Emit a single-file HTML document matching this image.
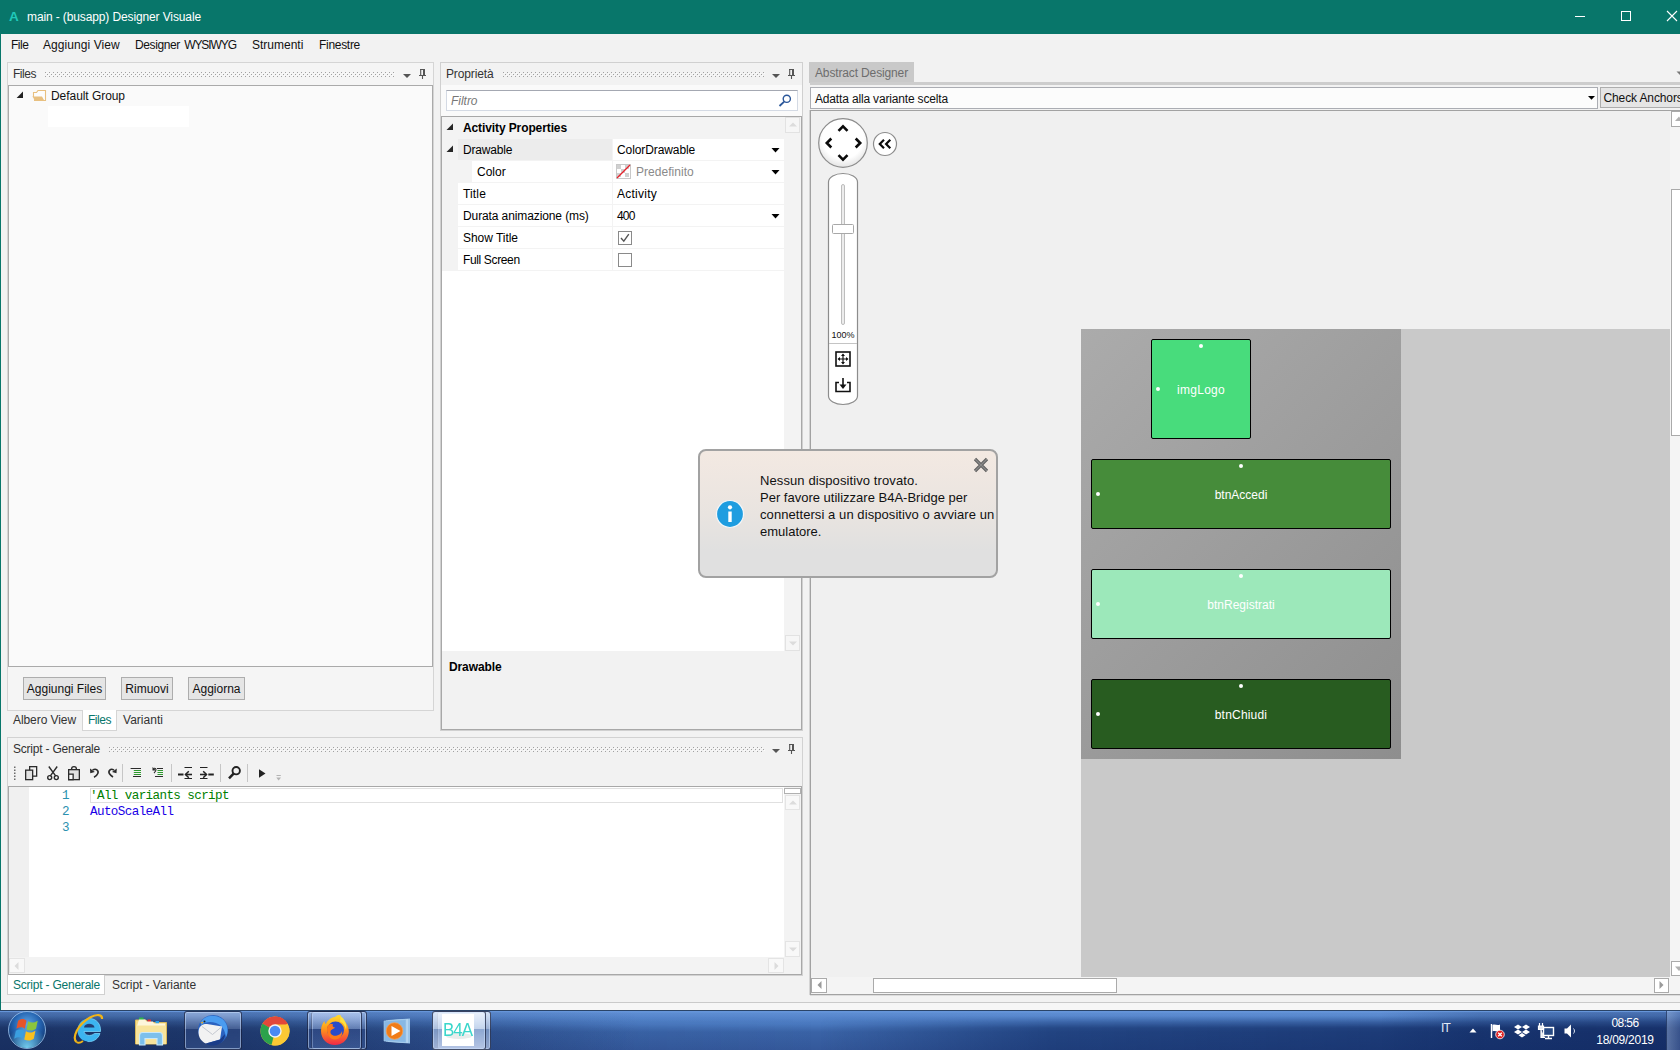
<!DOCTYPE html>
<html>
<head>
<meta charset="utf-8">
<title>Designer Visuale</title>
<style>
*{box-sizing:border-box;margin:0;padding:0}
html,body{width:1680px;height:1050px;overflow:hidden;background:#f2f2f2}
body{font-family:"Liberation Sans",sans-serif;font-size:12px;color:#111;position:relative}
.a{position:absolute}
.t{position:absolute;white-space:nowrap;line-height:16px;font-size:12px;color:#111}
.grip{position:absolute;height:6px;background-image:radial-gradient(circle,#b4b4b4 0.55px,transparent 0.85px),radial-gradient(circle,#b4b4b4 0.55px,transparent 0.85px);background-size:4px 4px,4px 4px;background-position:0 -1px,2px 1px}
.btn{position:absolute;height:22px;border:1px solid #adadad;background:#e5e5e5;text-align:center;line-height:20px;font-size:12px;white-space:nowrap}
.row{position:absolute;left:82px;width:702px;height:21px;background:#fff}
.mono{font-family:"Liberation Mono",monospace;font-size:12.6px;letter-spacing:-0.61px}
.view{position:absolute;border:1px solid #000;border-radius:2px;color:#fff;text-align:center;font-size:12px}
.view span{position:absolute;left:0;right:0;top:50%;margin-top:-7.500px;line-height:16px}
.view .dt{position:absolute;left:50%;top:3.500px;margin-left:-2.500px;width:4px;height:4px;border-radius:50%;background:#fff}
.view .dl{position:absolute;left:3.500px;top:50%;margin-top:-2.500px;width:4px;height:4px;border-radius:50%;background:#fff}
.dlg{font-size:13px;line-height:17px;color:#111}
.tbb{position:absolute;top:1011px;height:39px;border:1px solid rgba(20,30,60,.75);border-radius:3px;box-shadow:inset 0 0 0 1px rgba(200,220,250,.55);background:linear-gradient(rgba(190,210,245,.55),rgba(140,165,215,.35) 45%,rgba(50,75,135,.45) 46%,rgba(70,100,160,.4))}
.sbbtn{position:absolute;background:#fdfdfd;border:1px solid #dcdcdc}
</style>
</head>
<body>
<svg class="a" width="0" height="0" style="left:0;top:0"><defs><pattern id="gp" width="4" height="4" patternUnits="userSpaceOnUse"><rect x="0" y="0" width="1" height="1" fill="#a2a2a2"/><rect x="2" y="2" width="1" height="1" fill="#a2a2a2"/><rect x="1" y="1" width="1" height="1" fill="#fbfbfb"/><rect x="3" y="3" width="1" height="1" fill="#fbfbfb"/></pattern></defs></svg>
<!-- TITLE BAR -->
<div class="a" id="titlebar" style="left:0;top:0;width:1680px;height:34px;background:#08766a"></div>
<div class="a" style="left:0;top:34px;width:1px;height:976px;background:#08766a"></div>
<div class="t" style="left:9px;top:8px;color:#20c9ba;font-weight:bold;font-size:13.5px;line-height:18px">A</div>
<div class="t" style="left:27px;top:9px;color:#fff;letter-spacing:-0.121px/*auto*/">main - (busapp) Designer Visuale</div>
<svg class="a" style="left:1560px;top:0" width="120" height="34" viewBox="0 0 120 34">
 <path d="M15 16.5H25" stroke="#fff" stroke-width="1" fill="none"/>
 <rect x="61.5" y="11.5" width="9" height="9" stroke="#fff" stroke-width="1" fill="none"/>
 <path d="M107 11L117 21M117 11L107 21" stroke="#fff" stroke-width="1.1" fill="none"/>
</svg>

<!-- MENU BAR -->
<div class="t" style="left:11px;top:37px;letter-spacing:-0.461px/*auto*/">File</div>
<div class="t" style="left:43px;top:37px;letter-spacing:0.074px/*auto*/">Aggiungi View</div>
<div class="t" style="left:135px;top:37px;letter-spacing:-0.379px/*auto*/">Designer</div>
<div class="t" style="left:184.200px;top:37px;letter-spacing:-1.092px/*auto*/">WYSIWYG</div>
<div class="t" style="left:252px;top:37px">Strumenti</div>
<div class="t" style="left:319px;top:37px;letter-spacing:-0.295px/*auto*/">Finestre</div>

<!-- FILES PANEL -->
<div class="a" id="filespanel" style="left:7px;top:62px;width:427px;height:649px;border:1px solid #d5d5d5;background:#f5f5f5"></div>
<div class="t" style="left:13px;top:66px;color:#333;letter-spacing:-0.469px/*auto*/">Files</div>
<svg class="a" style="left:45px;top:72px" width="350" height="5" viewBox="0 0 350 5"><rect width="350" height="5" fill="url(#gp)"/></svg>
<svg class="a" style="left:403px;top:66px" width="28" height="18" viewBox="0 0 28 18">
 <path d="M0 8H8L4 12Z" fill="#555"/>
 <path d="M17 3.500H22M17.700 3V9.500M16 9.500H23M19.500 10V13" stroke="#555" stroke-width="1.100" fill="none"/><path d="M21 3V9.500" stroke="#555" stroke-width="2" fill="none"/>
</svg>
<div class="a" id="filestree" style="left:8px;top:85px;width:425px;height:582px;border:1px solid #aaa;background:#fafafa"></div>
<svg class="a" style="left:16px;top:89px" width="32" height="13" viewBox="0 0 32 13">
 <path d="M7 2.600V9H0.600Z" fill="#222"/>
 <path d="M17.500 8V3.500H20.500L22 1.500H29.500V11.500H18" fill="#fdfdfd" stroke="#e8c080" stroke-width="1.100"/>
 <path d="M16.300 7.500H26L28.500 12H18.500L17.500 9Z" fill="#e8c080"/>
</svg>
<div class="t" style="left:51px;top:88px;letter-spacing:-0.055px/*auto*/">Default Group</div>
<div class="a" style="left:48px;top:106px;width:141px;height:21px;background:#fff"></div>
<div class="btn" style="left:23px;top:677px;width:83px;height:23px;line-height:23px">Aggiungi Files</div>
<div class="btn" style="left:121px;top:677px;width:52px;height:23px;line-height:23px">Rimuovi</div>
<div class="btn" style="left:188px;top:677px;width:57px;height:23px;line-height:23px">Aggiorna</div>
<!-- tabs -->
<div class="t" style="left:13px;top:712px;color:#333;letter-spacing:-0.075px/*auto*/">Albero View</div>
<div class="a" style="left:82px;top:710px;width:35px;height:21px;background:#fff;border:1px solid #d5d5d5;border-top:none"></div>
<div class="t" style="left:88px;top:712px;color:#08766a;letter-spacing:-0.469px/*auto*/">Files</div>
<div class="t" style="left:123px;top:712px;color:#333;letter-spacing:0.025px/*auto*/">Varianti</div>

<!-- PROPRIETA PANEL -->
<div class="a" id="proppanel" style="left:440px;top:62px;width:363px;height:669px;border:1px solid #d0d0d0;background:linear-gradient(#f2f2f2 0,#f2f2f2 22px,#fafafa 22px)"></div>
<div class="t" style="left:446px;top:66px;color:#333;letter-spacing:-0.134px/*auto*/">Proprietà</div>
<svg class="a" style="left:503px;top:72px" width="262" height="5" viewBox="0 0 262 5"><rect width="262" height="5" fill="url(#gp)"/></svg>
<svg class="a" style="left:772px;top:66px" width="28" height="18" viewBox="0 0 28 18">
 <path d="M0 8H8L4 12Z" fill="#555"/>
 <path d="M17 3.500H22M17.700 3V9.500M16 9.500H23M19.500 10V13" stroke="#555" stroke-width="1.100" fill="none"/><path d="M21 3V9.500" stroke="#555" stroke-width="2" fill="none"/>
</svg>
<div class="a" id="filter" style="left:446px;top:90px;width:352px;height:21px;border:1px solid #d4dae4;border-top-color:#a4a8b2;background:#fff"></div>
<div class="t" style="left:451px;top:93px;color:#777;font-style:italic;letter-spacing:-0.029px/*auto*/">Filtro</div>
<div class="a" id="propgrid" style="left:441px;top:116px;width:361px;height:614px;border:1px solid #a8a8a8;background:#fff"></div>

<div class="a" style="left:442px;top:117px;width:359px;height:154px;background:#f3f3f3"></div>
<div class="a" style="left:784px;top:117px;width:17px;height:534px;background:#f3f3f3"></div>
<div class="a" style="left:442px;top:651px;width:359px;height:78px;background:#f2f2f2"></div>
<div class="t" style="left:463px;top:120px;font-weight:bold;color:#000;letter-spacing:-0.108px/*auto*/">Activity Properties</div>
<svg class="a" style="left:446px;top:123px" width="8" height="8" viewBox="0 0 8 8"><path d="M7 0.5V7H0.5Z" fill="#262626"/></svg>
<svg class="a" style="left:446px;top:145px" width="8" height="8" viewBox="0 0 8 8"><path d="M7 0.5V7H0.5Z" fill="#262626"/></svg>
<div class="a" style="left:458px;top:139px;width:154px;height:21px;background:#ececec"></div>
<div class="a" style="left:613px;top:139px;width:171px;height:21px;background:#fff"></div>
<div class="t" style="left:463px;top:142px;color:#000;letter-spacing:-0.188px/*auto*/">Drawable</div>
<div class="t" style="left:617px;top:142px;color:#000;letter-spacing:-0.090px/*auto*/">ColorDrawable</div>
<svg class="a" style="left:771px;top:148px" width="9" height="5" viewBox="0 0 9 5"><path d="M0.5 0H8.5L4.5 4.5Z" fill="#000"/></svg>
<div class="a" style="left:472px;top:161px;width:140px;height:21px;background:#fff"></div>
<div class="a" style="left:613px;top:161px;width:171px;height:21px;background:#fff"></div>
<div class="t" style="left:477px;top:164px;color:#000">Color</div>
<svg class="a" style="left:771px;top:170px" width="9" height="5" viewBox="0 0 9 5"><path d="M0.5 0H8.5L4.5 4.5Z" fill="#000"/></svg>
<div class="a" style="left:458px;top:183px;width:154px;height:21px;background:#fff"></div>
<div class="a" style="left:613px;top:183px;width:171px;height:21px;background:#fff"></div>
<div class="t" style="left:463px;top:186px;color:#000;letter-spacing:0.153px/*auto*/">Title</div>
<div class="t" style="left:617px;top:186px;color:#000;letter-spacing:0.248px/*auto*/">Activity</div>
<div class="a" style="left:458px;top:205px;width:154px;height:21px;background:#fff"></div>
<div class="a" style="left:613px;top:205px;width:171px;height:21px;background:#fff"></div>
<div class="t" style="left:463px;top:208px;color:#000;letter-spacing:-0.107px/*auto*/">Durata animazione (ms)</div>
<div class="t" style="left:617px;top:208px;color:#000;letter-spacing:-0.844px/*auto*/">400</div>
<svg class="a" style="left:771px;top:214px" width="9" height="5" viewBox="0 0 9 5"><path d="M0.5 0H8.5L4.5 4.5Z" fill="#000"/></svg>
<div class="a" style="left:458px;top:227px;width:154px;height:21px;background:#fff"></div>
<div class="a" style="left:613px;top:227px;width:171px;height:21px;background:#fff"></div>
<div class="t" style="left:463px;top:230px;color:#000;letter-spacing:-0.036px/*auto*/">Show Title</div>
<div class="a" style="left:458px;top:249px;width:154px;height:21px;background:#fff"></div>
<div class="a" style="left:613px;top:249px;width:171px;height:21px;background:#fff"></div>
<div class="t" style="left:463px;top:252px;color:#000;letter-spacing:-0.364px/*auto*/">Full Screen</div>
<svg class="a" style="left:616px;top:164px" width="15" height="15" viewBox="0 0 15 15">
 <rect x="0.5" y="0.5" width="14" height="14" fill="#fff" stroke="#c8c8c8"/>
 <rect x="1" y="1" width="4" height="4" fill="#d0d0d0"/><rect x="9" y="1" width="4" height="4" fill="#d0d0d0"/>
 <rect x="5" y="5" width="4" height="4" fill="#d0d0d0"/><rect x="1" y="9" width="4" height="4" fill="#d0d0d0"/><rect x="9" y="9" width="4" height="4" fill="#d0d0d0"/>
 <path d="M1 14L14 1" stroke="#e8202a" stroke-width="1.3"/>
</svg>
<div class="t" style="left:636px;top:164px;color:#8a8a8a;letter-spacing:0.030px/*auto*/">Predefinito</div>
<svg class="a" style="left:618px;top:231px" width="14" height="14" viewBox="0 0 14 14"><rect x="0.5" y="0.5" width="13" height="13" fill="#fff" stroke="#8a8a8a"/><path d="M3 7L5.8 10.2L10.8 3.2" stroke="#555" stroke-width="1.4" fill="none"/></svg>
<svg class="a" style="left:618px;top:253px" width="14" height="14" viewBox="0 0 14 14"><rect x="0.5" y="0.5" width="13" height="13" fill="#fff" stroke="#8a8a8a"/></svg>
<div class="sbbtn" style="left:785px;top:117px;width:15px;height:16px;background:#f6f6f6;border-color:#e2e2e2"></div><svg class="a" style="left:789px;top:122px" width="8" height="5" viewBox="0 0 8 5"><path d="M0 4.5H8L4 0.5Z" fill="#dcdcdc"/></svg>
<div class="sbbtn" style="left:785px;top:635px;width:15px;height:16px;background:#f6f6f6;border-color:#e2e2e2"></div><svg class="a" style="left:789px;top:641px" width="8" height="5" viewBox="0 0 8 5"><path d="M0 0.5H8L4 4.5Z" fill="#dcdcdc"/></svg>
<div class="t" style="left:449px;top:659px;font-weight:bold;color:#000;letter-spacing:-0.107px/*auto*/">Drawable</div>
<svg class="a" style="left:778px;top:93px" width="15" height="15" viewBox="0 0 15 15"><circle cx="8.8" cy="5.8" r="3.6" fill="none" stroke="#2b579a" stroke-width="1.4"/><path d="M6.2 8.6L1.5 13" stroke="#2b579a" stroke-width="1.8"/></svg>

<!-- SCRIPT PANEL -->
<div class="a" id="scriptpanel" style="left:7px;top:737px;width:796px;height:239px;border:1px solid #d2d2d2;background:#f2f2f2"></div>
<div class="t" style="left:13px;top:741px;color:#333;letter-spacing:-0.218px/*auto*/">Script - Generale</div>
<svg class="a" style="left:109px;top:747px" width="656" height="5" viewBox="0 0 656 5"><rect width="656" height="5" fill="url(#gp)"/></svg>
<svg class="a" style="left:772px;top:741px" width="28" height="18" viewBox="0 0 28 18">
 <path d="M0 8H8L4 12Z" fill="#555"/>
 <path d="M17 3.500H22M17.700 3V9.500M16 9.500H23M19.500 10V13" stroke="#555" stroke-width="1.100" fill="none"/><path d="M21 3V9.500" stroke="#555" stroke-width="2" fill="none"/>
</svg>
<div class="a" id="editor" style="left:8px;top:786px;width:794px;height:189px;border:1px solid #a8a8a8;background:#fff"></div>
<svg class="a" id="toolbar" style="left:10px;top:762px" width="280" height="24" viewBox="0 0 280 24">
 <g fill="#6a6a6a"><rect x="4" y="4.500" width="1.500" height="1.500"/><rect x="4" y="7.500" width="1.500" height="1.500"/><rect x="4" y="10.500" width="1.500" height="1.500"/><rect x="4" y="13.500" width="1.500" height="1.500"/><rect x="4" y="16.500" width="1.500" height="1.500"/></g>
 <!-- copy -->
 <g stroke="#2b2b2b" stroke-width="1.300"><rect x="19.650" y="4.650" width="7" height="9.500" fill="#f2f2f2"/><rect x="15.650" y="8.150" width="7" height="9.500" fill="#e2e2e2"/></g>
 <!-- cut -->
 <g fill="none" stroke="#2b2b2b" stroke-width="1.400"><path d="M38.800 4.500L45.800 14.200M47.200 4.500L40.200 14.200"/><circle cx="39.700" cy="15.600" r="2"/><circle cx="46.300" cy="15.600" r="2"/></g>
 <!-- paste -->
 <g stroke="#2b2b2b" stroke-width="1.300"><path d="M61.500 7.500A2.500 2.800 0 0 1 66.500 7.500" fill="none"/><rect x="58.650" y="7.650" width="10.700" height="10" fill="#e2e2e2"/><rect x="58.650" y="12.150" width="4.500" height="5.500" fill="#fafafa"/></g>
 <!-- undo -->
 <path d="M82.500 8.200C86 5.800 89 8.500 87.800 11.500C87 13.500 85.500 14.500 84 15.200" fill="none" stroke="#2b2b2b" stroke-width="1.600"/><path d="M80 6.500L80.300 11.300L84.800 10Z" fill="#2b2b2b"/>
 <!-- redo -->
 <path d="M104 8.200C100.500 5.800 97.800 9 99.500 11.800C100.500 13.300 101.800 14.200 103 15" fill="none" stroke="#2b2b2b" stroke-width="1.600"/><path d="M106.800 6.500L106.500 11.300L102 10Z" fill="#2b2b2b"/>
 <path d="M112.500 2V20" stroke="#c6c6c6"/>
 <!-- comment -->
 <path d="M120.600 6.500H131M123 14.500H131" stroke="#2b2b2b" stroke-width="1.100"/><path d="M123.800 8.500H131M123.800 10.500H131M123.800 12.500H131" stroke="#2f9a2f" stroke-width="1"/>
 <!-- uncomment -->
 <path d="M147 6.500H153M145 14.500H153" stroke="#2b2b2b" stroke-width="1.100"/><path d="M147.500 8.500H153M147.500 10.500H153M147.500 12.500H153" stroke="#2f9a2f" stroke-width="1"/>
 <path d="M143.500 6.500C146.500 5.500 147 8.500 144 11" fill="none" stroke="#2b2b2b" stroke-width="1.100"/><path d="M142.500 5V8.500H146Z" fill="#2b2b2b"/>
 <path d="M161.500 2V20" stroke="#c6c6c6"/>
 <!-- outdent / indent -->
 <g stroke="#222" fill="none"><path d="M174.500 5.500H182M174.500 16.500H182" stroke-width="1"/><path d="M168 12.500H173.500" stroke-width="2"/><path d="M175.500 12.500H182" stroke-width="1.600"/><path d="M178.800 9.200L175.500 12.500L178.800 15.800" stroke-width="1.500"/></g>
 <g stroke="#222" fill="none"><path d="M190 5.500H197.500M190 16.500H197.500" stroke-width="1"/><path d="M198.300 12.500H203.800" stroke-width="2"/><path d="M190 12.500H196.500" stroke-width="1.600"/><path d="M193.200 9.200L196.500 12.500L193.200 15.800" stroke-width="1.500"/></g>
 <path d="M210.500 2V20" stroke="#c6c6c6"/>
 <!-- find -->
 <circle cx="226.200" cy="8.700" r="3.700" fill="none" stroke="#222" stroke-width="1.900"/><path d="M223.600 11.600L219 16.300" stroke="#222" stroke-width="2.500"/>
 <path d="M237.500 2V20" stroke="#c6c6c6"/>
 <!-- play -->
 <path d="M249 7.200V15.800L255.500 11.500Z" fill="#222"/>
 <path d="M266.500 13.500H270.800" stroke="#b4b4b4" stroke-width="1"/><path d="M266.300 15.500H271L268.650 18.500Z" fill="#b4b4b4"/>
</svg>
<div class="a" style="left:9px;top:787px;width:20px;height:170px;background:#f0f0f0"></div>
<div class="a" style="left:90px;top:788px;width:693px;height:15px;border:1px solid #e0e0e0;background:#fff"></div>
<div class="t mono" style="left:62px;top:788px;color:#2b91af">1</div>
<div class="t mono" style="left:62px;top:804px;color:#2b91af">2</div>
<div class="t mono" style="left:62px;top:820px;color:#2b91af">3</div>
<div class="t mono" style="left:90px;top:788px;color:#008000">'All variants script</div>
<div class="t mono" style="left:90px;top:804px;color:#1a00e6">AutoScaleAll</div>
<!-- editor scrollbars -->
<div class="a" style="left:784px;top:787px;width:17px;height:170px;background:#f3f3f3"></div>
<div class="a" style="left:9px;top:957px;width:792px;height:17px;background:#f3f3f3"></div>
<div class="sbbtn" style="left:784px;top:788px;width:17px;height:6px;background:#fff;border-color:#b0b0b0"></div>
<div class="sbbtn" style="left:785px;top:795px;width:15px;height:15px;background:#f8f8f8;border-color:#e4e4e4"></div>
<svg class="a" style="left:789px;top:800px" width="8" height="5" viewBox="0 0 8 5"><path d="M0 4.500H8L4 0.500Z" fill="#dcdcdc"/></svg>
<div class="sbbtn" style="left:785px;top:941px;width:15px;height:16px;background:#f8f8f8;border-color:#e4e4e4"></div>
<svg class="a" style="left:789px;top:947px" width="8" height="5" viewBox="0 0 8 5"><path d="M0 0.500H8L4 4.500Z" fill="#dcdcdc"/></svg>
<div class="sbbtn" style="left:9px;top:958px;width:16px;height:15px;background:#f8f8f8;border-color:#e4e4e4"></div>
<svg class="a" style="left:14px;top:962px" width="5" height="8" viewBox="0 0 5 8"><path d="M4.500 0V8L0.500 4Z" fill="#dcdcdc"/></svg>
<div class="sbbtn" style="left:768px;top:958px;width:16px;height:15px;background:#f8f8f8;border-color:#e4e4e4"></div>
<svg class="a" style="left:774px;top:962px" width="5" height="8" viewBox="0 0 5 8"><path d="M0.500 0V8L4.500 4Z" fill="#dcdcdc"/></svg>
<div class="a" style="left:7px;top:975px;width:98px;height:20px;background:#fff;border:1px solid #d0d0d0;border-top:none"></div>
<div class="t" style="left:13px;top:977px;color:#08766a;letter-spacing:-0.218px/*auto*/">Script - Generale</div>
<div class="t" style="left:112px;top:977px;color:#333;letter-spacing:-0.068px/*auto*/">Script - Variante</div>

<!-- ABSTRACT DESIGNER -->
<div class="a" id="adtab" style="left:809px;top:62px;width:105px;height:21px;background:#c9c9c9"></div>
<div class="t" style="left:815px;top:65px;color:#6d6d6d;letter-spacing:-0.140px/*auto*/">Abstract Designer</div>
<div class="a" style="left:810px;top:82px;width:870px;height:3px;background:#cdcdcd"></div>
<svg class="a" style="left:1676px;top:71px" width="4" height="5" viewBox="0 0 4 5"><path d="M0.500 0.500H8L4.500 4.500Z" fill="#777"/></svg>
<div class="a" id="combo" style="left:810px;top:87px;width:788px;height:22px;border:1px solid #abadb3;background:#fcfcfc"></div>
<div class="t" style="left:815px;top:91px;letter-spacing:-0.164px/*auto*/">Adatta alla variante scelta</div>
<div class="btn" style="left:1600px;top:87px;width:100px;text-align:left;padding-left:2.500px;height:21px;line-height:20px;letter-spacing:-.12px">Check Anchors</div>
<svg class="a" style="left:1588px;top:96px" width="7" height="4" viewBox="0 0 7 4"><path d="M0 0H7L3.500 3.800Z" fill="#000"/></svg>
<div class="a" id="canvas" style="left:810px;top:110px;width:870px;height:885px;border:1px solid #a2a2a2;border-right:none;background:#f0f0f0"></div>
<div class="a" style="left:809px;top:110px;width:1px;height:885px;background:#d4d4d4"></div>
<div class="a" style="left:810px;top:995px;width:870px;height:1px;background:#dcdcdc"></div>
<div class="a" id="grayarea" style="left:1081px;top:329px;width:590px;height:648px;background:#c9c9c9"></div>
<div class="a" id="phone" style="left:1081px;top:329px;width:320px;height:430px;background:linear-gradient(135deg,#ababab,#8e8e8e)"></div>


<!-- designer scrollbars -->
<div class="a" style="left:1670px;top:111px;width:10px;height:867px;background:#f4f4f4"></div>
<div class="a" style="left:812px;top:977px;width:868px;height:17px;background:#f4f4f4"></div>
<div class="sbbtn" style="left:1671px;top:111px;width:16px;height:16px;background:#fff;border-color:#aaa"></div>
<svg class="a" style="left:1675px;top:116px" width="8" height="6" viewBox="0 0 8 6"><path d="M0 5H8L4 0.500Z" fill="#b0b0b0"/></svg>
<div class="sbbtn" style="left:1671px;top:189px;width:16px;height:247px;background:#fff;border-color:#aaa"></div>
<div class="sbbtn" style="left:1671px;top:961px;width:16px;height:15px;background:#fff;border-color:#aaa"></div>
<svg class="a" style="left:1675px;top:966px" width="8" height="6" viewBox="0 0 8 6"><path d="M0 0.500H8L4 5Z" fill="#b0b0b0"/></svg>
<div class="sbbtn" style="left:811px;top:978px;width:16px;height:15px;background:#fff;border-color:#aaa"></div>
<svg class="a" style="left:817px;top:981px" width="5" height="8" viewBox="0 0 5 8"><path d="M4.500 0V8L0.500 4Z" fill="#9a9a9a"/></svg>
<div class="sbbtn" style="left:873px;top:978px;width:244px;height:15px;background:#fff;border-color:#aaa"></div>
<div class="sbbtn" style="left:1654px;top:978px;width:15px;height:15px;background:#fff;border-color:#aaa"></div>
<svg class="a" style="left:1659px;top:981px" width="5" height="8" viewBox="0 0 5 8"><path d="M0.500 0V8L4.500 4Z" fill="#9a9a9a"/></svg>

<!-- nav tools -->
<svg class="a" id="navtools" style="left:812px;top:112px" width="100" height="300" viewBox="0 0 100 300">
 <defs><radialGradient id="rg" cx="50%" cy="40%" r="60%"><stop offset="70%" stop-color="#fff"/><stop offset="100%" stop-color="#e4e4e4"/></radialGradient></defs>
 <circle cx="31" cy="31" r="24.300" fill="url(#rg)" stroke="#8c8c8c" stroke-width="1.200"/>
 <g fill="none" stroke="#0a0a0a" stroke-width="2.600"><path d="M26.500 18.800L31 14.300L35.500 18.800"/><path d="M26.500 43.200L31 47.700L35.500 43.200"/><path d="M19.300 26.500L14.800 31L19.300 35.500"/><path d="M43.700 26.500L48.200 31L43.700 35.500"/></g>
 <circle cx="73" cy="32" r="11.500" fill="#fff" stroke="#8c8c8c" stroke-width="1.200"/>
 <g fill="none" stroke="#0a0a0a" stroke-width="2.200"><path d="M72 27.800L67.800 32L72 36.200"/><path d="M78.300 27.800L74.100 32L78.300 36.200"/></g>
 <rect x="16.500" y="61.500" width="29" height="231" rx="14.500" ry="8.500" fill="#fff" stroke="#8c8c8c" stroke-width="1.200"/>
 <rect x="29.500" y="72.500" width="3" height="140" rx="1.500" fill="#ececec" stroke="#bdbdbd"/>
 <rect x="20.500" y="112.500" width="21" height="9" rx="1" fill="#fff" stroke="#a8a8a8"/>
 <path d="M17 231.500H45" stroke="#c4c4c4"/>
 <!-- fit icon -->
 <rect x="24" y="240" width="14" height="14" fill="#fff" stroke="#111" stroke-width="1.600"/>
 <path d="M31 242.500V251.500M26.500 247H35.500" stroke="#111" stroke-width="1.200"/>
 <path d="M31 241.500L29 244H33ZM31 252.500L29 250H33ZM25.500 247L28 245V249ZM36.500 247L34 245V249Z" fill="#111"/>
 <!-- save icon -->
 <path d="M27 270.500H24V279.500H38V270.500H35" fill="none" stroke="#111" stroke-width="1.600"/>
 <path d="M31 266V274" stroke="#111" stroke-width="1.600"/><path d="M27.500 272.500H34.500L31 277Z" fill="#111"/>
</svg>
<div class="t" style="left:831px;top:329px;font-size:9px;width:24px;text-align:center;color:#111;line-height:12px">100%</div>

<!-- views -->
<div class="view" style="left:1151px;top:339px;width:100px;height:100px;background:#48dc7c"><i class="dt"></i><i class="dl"></i><span style="letter-spacing:.3px">imgLogo</span></div>
<div class="view" style="left:1091px;top:459px;width:300px;height:70px;background:#468c3a"><i class="dt"></i><i class="dl"></i><span>btnAccedi</span></div>
<div class="view" style="left:1091px;top:569px;width:300px;height:70px;background:#9ce8ba"><i class="dt"></i><i class="dl"></i><span>btnRegistrati</span></div>
<div class="view" style="left:1091px;top:679px;width:300px;height:70px;background:#285c20"><i class="dt"></i><i class="dl"></i><span style="letter-spacing:.2px">btnChiudi</span></div>

<!-- dialog -->
<div class="a" id="dialog" style="left:698px;top:449px;width:300px;height:129px;border:2px solid #a2a2a2;border-radius:8px;background:linear-gradient(#f3e9e2,#e9e4e0 50%,#e0e0e0 80%)"></div>
<svg class="a" style="left:715px;top:499px" width="30" height="30" viewBox="0 0 30 30"><circle cx="15" cy="15" r="13.500" fill="#1e9de0" stroke="#f4f6f8" stroke-width="1.200"/><rect x="13.300" y="12.500" width="3.400" height="10.500" fill="#fff"/><circle cx="15" cy="8.300" r="2.100" fill="#fff"/></svg>
<svg class="a" style="left:972px;top:456px" width="18" height="18" viewBox="0 0 18 18"><path d="M3 3L15 15M15 3L3 15" stroke="#606060" stroke-width="3.200"/><path d="M3 3L15 15M15 3L3 15" stroke="#8a8a8a" stroke-width="1.200"/></svg>
<div class="t dlg" style="left:760px;top:472px;letter-spacing:0.098px/*auto*/">Nessun dispositivo trovato.</div>
<div class="t dlg" style="left:760px;top:489px">Per favore utilizzare B4A-Bridge per</div>
<div class="t dlg" style="left:760px;top:506px;letter-spacing:0.074px/*auto*/">connettersi a un dispositivo o avviare un</div>
<div class="t dlg" style="left:760px;top:523px">emulatore.</div>

<div class="a" style="left:1px;top:1002px;width:1679px;height:1px;background:#cacaca"></div>
<div class="a" style="left:1px;top:1003px;width:1679px;height:7px;background:#f6f6f6"></div>
<!-- TASKBAR -->
<div class="a" id="taskbar" style="left:0;top:1010px;width:1680px;height:40px;background:linear-gradient(#2a4468 0,#2a4468 1px,#6a9ade 1px,#5686cd 3px,#4a79bf 14px,#3a63a6 22px,#34589a 40px)"></div>
<div class="a" style="left:0;top:1012px;width:1680px;height:38px;background:linear-gradient(90deg,rgba(14,32,76,.4) 0,rgba(14,32,76,.34) 200px,rgba(18,38,84,.16) 430px,rgba(40,70,130,0) 640px,rgba(40,70,130,0) 1380px,rgba(14,40,96,.3) 1480px,rgba(12,34,88,.4) 1680px)"></div>
<div class="a" style="left:0;top:1016px;width:1680px;height:34px;-webkit-mask-image:linear-gradient(transparent,#000 12px);mask-image:linear-gradient(transparent,#000 12px);background:linear-gradient(90deg,rgba(12,28,70,.5) 0,rgba(12,28,70,.45) 200px,rgba(16,34,80,.25) 430px,rgba(30,60,120,.04) 640px,rgba(30,60,120,0) 820px,rgba(10,36,92,.5) 1050px,rgba(10,34,90,.62) 1400px,rgba(10,30,84,.6) 1680px)"></div>
<div class="a" style="left:0;top:1012px;width:1680px;height:10px;background:linear-gradient(rgba(120,165,230,.25),rgba(120,165,230,0))"></div>
<!-- active buttons -->
<div class="tbb" style="left:184px;width:58px"></div>
<div class="tbb" style="left:311px;width:56px"></div><div class="tbb" style="left:307px;width:55px"></div>
<div class="tbb" style="left:437px;width:54px;background:linear-gradient(rgba(235,242,252,.85),rgba(200,215,240,.7) 45%,rgba(150,175,215,.65) 46%,rgba(190,205,235,.7))"></div><div class="tbb" style="left:432px;width:54px;background:linear-gradient(rgba(235,242,252,.9),rgba(205,220,242,.8) 45%,rgba(150,175,215,.75) 46%,rgba(190,205,235,.8))"></div>
<!-- start orb -->
<svg class="a" style="left:6px;top:1010px" width="44" height="40" viewBox="0 0 44 40">
 <defs><radialGradient id="orb" cx="50%" cy="35%" r="65%"><stop offset="0" stop-color="#5fa8e8"/><stop offset="55%" stop-color="#2463b0"/><stop offset="100%" stop-color="#0f2f66"/></radialGradient>
 <radialGradient id="orbg" cx="50%" cy="100%" r="60%"><stop offset="0" stop-color="#7fe0ff" stop-opacity=".9"/><stop offset="100%" stop-color="#7fe0ff" stop-opacity="0"/></radialGradient></defs>
 <circle cx="21" cy="20" r="18.500" fill="url(#orb)" stroke="#9cc4ee" stroke-width="1" stroke-opacity=".8"/>
 <circle cx="21" cy="20" r="18" fill="url(#orbg)"/>
 <g transform="translate(20.500 20) scale(1.120 1.250) translate(-20 -20)"><path d="M12.500 12.500C15.500 10.500 18 11 20 12.500L18.500 19C16.500 17.500 14 17.500 11 19Z" fill="#e8542a"/>
 <path d="M21.500 13C24 14.500 26.500 14.500 30 12.500L28.500 19C25.500 21 22.500 20.500 20 19.500Z" fill="#8cc63e"/>
 <path d="M10.500 20.500C13.500 19 16 19.500 18 20.500L16.500 27C14.500 25.500 12 25.500 9 27Z" fill="#3a9fe0"/>
 <path d="M19.500 21C22 22.500 24.500 22.500 28 20.500L26.500 27C23.500 29 20.500 28.500 18 27.500Z" fill="#f8c020"/></g>
</svg>
<!-- IE -->
<svg class="a" style="left:70px;top:1012px" width="38" height="36" viewBox="0 0 38 36">
 <path d="M19 6.500C26.500 6.500 31 12 30.500 19.500H14C14.500 23.500 20.500 25 24.500 21.500H30C27.500 28.500 21.500 30 17.500 29.500C11 28.800 7.500 24 7.500 18.500C7.500 11.500 12.500 6.500 19 6.500ZM14 15.500H24.500C24 10.500 14.500 10.500 14 15.500Z" fill="#3cb4f0"/>
 <path d="M19 6.500C26.500 6.500 31 12 30.500 19.500H14C14.500 23.500 20.500 25 24.500 21.500H30C27.500 28.500 21.500 30 17.500 29.500" fill="none" stroke="#7ad4fa" stroke-width=".800"/>
 <path d="M6.500 30C2 26 7 13 20 5.500C27 1.500 32.500 2.500 32 7" fill="none" stroke="#f0b418" stroke-width="2.200"/>
 <path d="M6.500 30C8.500 31.500 11 30.500 13 29" fill="none" stroke="#f0b418" stroke-width="1.800"/>
</svg>
<!-- Explorer -->
<svg class="a" style="left:133px;top:1014px" width="36" height="34" viewBox="0 0 36 34">
 <path d="M2.500 6H13L15 8.500H33.500V30H2.500Z" fill="#f6dc8a" stroke="#d8b85a" stroke-width="1"/>
 <rect x="6" y="3.500" width="4.500" height="2.500" fill="#30b848"/><rect x="14.500" y="5.500" width="3.500" height="2.500" fill="#e03030"/><rect x="22.500" y="7" width="3.500" height="2.500" fill="#30a0e8"/>
 <path d="M6 5.500H12L13.500 7.500H20L21 9.500H32V12H4Z" fill="#fdf6dc"/>
 <path d="M3 11.500H33V30H3Z" fill="#f8e49c"/>
 <path d="M6.500 31V21.500C6.500 19.500 7.500 18.500 9.500 18.500H26.500C28.500 18.500 29.500 19.500 29.500 21.500V31H24V24.500H12V31Z" fill="#7cc0ec" stroke="#c8e8fa" stroke-width="1.200"/>
</svg>
<!-- Thunderbird -->
<svg class="a" style="left:195px;top:1012px" width="36" height="36" viewBox="0 0 36 36">
 <circle cx="18" cy="18" r="15" fill="#2a62c0"/>
 <path d="M6 10C10 2.500 22 1.500 29 8.500C33 13 33.500 20 31 25C30 18 27 13 21 11C15 9 10 10 6 13Z" fill="#4a9cf0"/>
 <path d="M3.500 20C3.500 14 8 11.500 12 12L27 14.500L25 27.500L11 31.500C6 29.500 3.500 25 3.500 20Z" fill="#f2f2f2"/>
 <path d="M7 14.500L17.500 22.500L26.500 15" fill="none" stroke="#c4c8d0" stroke-width="1"/>
 <path d="M11 31.500L25 27.500L30 22C30 29 24 33.500 18 33.500C15 33.500 13 33 11 31.500Z" fill="#1a3c88"/>
 <circle cx="9.500" cy="9.500" r="1" fill="#222"/><path d="M5 11L8 9.500V11.500Z" fill="#e8a020"/>
</svg>
<!-- Chrome -->
<svg class="a" style="left:259px;top:1015px" width="32" height="32" viewBox="0 0 32 32">
 <circle cx="16" cy="16" r="14.500" fill="#fcc934"/>
 <path d="M16 16L3.440 8.750A14.500 14.500 0 0 1 28.560 8.750Z" fill="#e2483a"/>
 <path d="M16 16L3.440 8.750A14.500 14.500 0 0 0 12.500 30.070Z" fill="#2ba24c"/>
 <path d="M16 1.500A14.500 14.500 0 0 1 28.560 8.750H16Z" fill="#e2483a"/>
 <path d="M16 9.500H28.900A14.500 14.500 0 0 1 12.500 30.070L19 21Z" fill="#fcc934"/>
 <path d="M3.440 8.750L10.400 19.500L16 16Z" fill="#2ba24c"/>
 <circle cx="16" cy="16" r="6.700" fill="#f4f4f4"/><circle cx="16" cy="16" r="5.300" fill="#4a8af4"/>
</svg>
<!-- Firefox -->
<svg class="a" style="left:318px;top:1013px" width="34" height="34" viewBox="0 0 34 34">
 <defs><linearGradient id="ffg" x1="0" y1="0" x2="0" y2="1"><stop offset="0" stop-color="#ffdd30"/><stop offset="45%" stop-color="#ff9a18"/><stop offset="100%" stop-color="#f02848"/></linearGradient></defs>
 <path d="M17 4C19 1.500 22 1.500 23 2.500C22.500 4 23.500 5.500 25 7C30 11 31.500 16 30.500 21C29 28 23.500 32 17 32C9 32 3 26 3 18C3 13 5 9.500 6.500 8C6.500 9.500 7 10.500 8 11C9 7.500 13 4.500 17 4Z" fill="url(#ffg)"/>
 <circle cx="17.500" cy="17" r="8.500" fill="#2a4cc8"/>
 <path d="M9.500 13C11 11 13.500 10.500 15 11.500C14 13 15 14.500 17 14.500C15.500 16.500 13 16 12.500 18.500C12 21.500 15.500 23.500 19 22.500C22 21.500 23.500 20 24 18C25 22 22 26.500 17 26.500C11.500 26.500 7.500 20 9.500 13Z" fill="#ff7a18"/>
 <path d="M22.500 3C26.500 6 29.500 11 28 17C27 12 24.500 9.500 22 8.500C22.500 6.500 22 4.500 22.500 3Z" fill="#ffe040"/>
</svg>
<!-- WMP -->
<svg class="a" style="left:382px;top:1016px" width="32" height="30" viewBox="0 0 32 30">
 <path d="M6 4L28 2.500V27.500L6 26Z" fill="#9cc4e8"/><path d="M4 4.500L26 3V27L4 25.500Z" fill="#b4d4f0"/><path d="M2 5L24 3.500V26.500L2 25Z" fill="#88b8e4" stroke="#a8ccec" stroke-width=".600"/>
 <circle cx="12.500" cy="15" r="8.300" fill="#f07c18"/><circle cx="12.500" cy="15" r="8.300" fill="none" stroke="#f8a050" stroke-width=".800"/>
 <path d="M9.500 10V20L18.500 15Z" fill="#fff"/>
</svg>
<!-- B4A -->
<div class="a" style="left:442px;top:1014px;width:32px;height:32px;background:#fff"></div>
<div class="a" style="left:446px;top:1033px;width:26px;height:6px;border-radius:50%;background:#e8ecec"></div>
<div class="t" style="left:443px;top:1020px;color:#3ad6cb;font-size:17px;line-height:20px;letter-spacing:-1px;transform:scaleY(1.100)">B4A</div>
<!-- tray -->
<div class="t" style="left:1441px;top:1020px;color:#e4ecf8;font-size:12px;letter-spacing:-0.936px/*auto*/">IT</div>
<svg class="a" style="left:1466px;top:1018px" width="120" height="24" viewBox="0 0 120 24">
 <path d="M3.500 14.500H10.500L7 10.500Z" fill="#fff"/>
 <!-- flag -->
 <path d="M25.500 6V20" stroke="#fff" stroke-width="1.400"/><path d="M26.500 7C29 5.500 31 8 34 6.500V13C31 14.500 29 12 26.500 13.500Z" fill="#fff"/>
 <circle cx="34" cy="16.500" r="4.300" fill="#e02020" stroke="#fff" stroke-width=".800"/><path d="M32.200 14.700L35.800 18.300M35.800 14.700L32.200 18.300" stroke="#fff" stroke-width="1.300"/>
 <!-- dropbox -->
 <path d="M52 6.500L56 9L52 11.500L48 9ZM60 6.500L64 9L60 11.500L56 9ZM52 11.500L56 14L52 16.500L48 14ZM60 11.500L64 14L60 16.500L56 14ZM56 15L59.500 17.200L56 19.500L52.500 17.200Z" fill="#fff"/>
 <!-- network -->
 <rect x="77.500" y="9.500" width="10" height="8" fill="#284a84" stroke="#fff" stroke-width="1.400"/><path d="M79 20.500H86M82.500 18V20.500" stroke="#fff" stroke-width="1.400"/>
 <path d="M73.500 5V8M76.500 5V8M72.500 8H77.500V11.500H72.500ZM75 11.500V19.500H79" stroke="#fff" stroke-width="1.200" fill="#fff" fill-opacity=".9"/>
 <!-- speaker -->
 <path d="M98.500 10.500H101L105 6.500V19.500L101 15.500H98.500Z" fill="#fff"/><path d="M107.500 10.500C108.800 12 108.800 14 107.500 15.500" stroke="#dfe8f4" stroke-width="1" fill="none"/>
</svg>
<div class="t" style="left:1596px;top:1015px;width:58px;text-align:center;color:#fff;font-size:12px;letter-spacing:-0.606px/*auto*/">08:56</div>
<div class="t" style="left:1590px;top:1032px;width:70px;text-align:center;color:#fff;font-size:12px;letter-spacing:-0.256px/*auto*/">18/09/2019</div>
<div class="a" style="left:1666px;top:1011px;width:14px;height:39px;border-left:1px solid rgba(30,50,90,.7);background:linear-gradient(90deg,rgba(170,195,235,.45),rgba(120,150,205,.35))"></div>
</body>
</html>
